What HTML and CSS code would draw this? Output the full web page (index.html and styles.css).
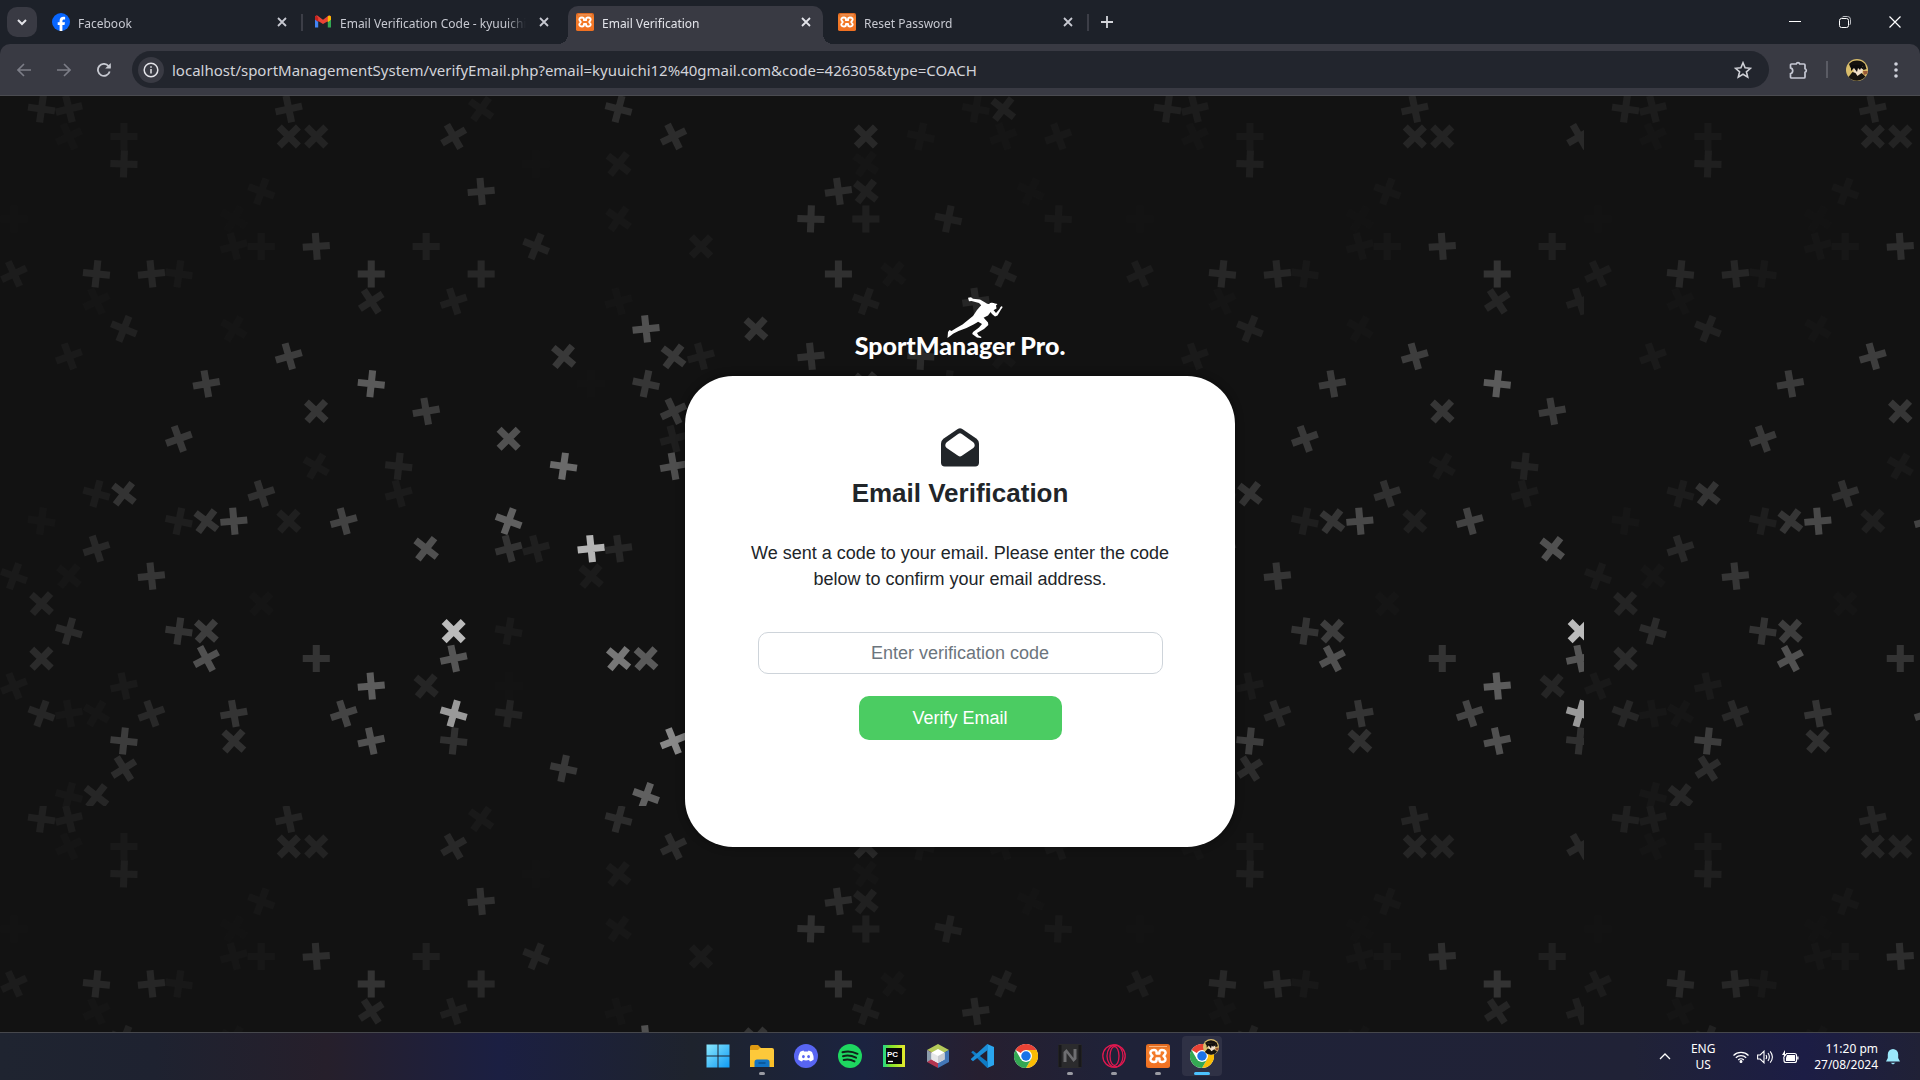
FILE: index.html
```html
<!DOCTYPE html>
<html lang="en">
<head>
<meta charset="utf-8">
<meta name="viewport" content="width=device-width, initial-scale=1">
<title>Email Verification</title>
<link rel="stylesheet" href="styles.css">
</head>
<body>
<svg class="defs" aria-hidden="true">
  <defs>
    <symbol id="close" viewBox="0 0 10 10"><path d="M1 1l8 8M9 1L1 9" fill="none" stroke="currentColor" stroke-width="1.8"/></symbol>
    <linearGradient id="xg" x2="0" y2="1"><stop offset="0" stop-color="#d9651f"/><stop offset=".25" stop-color="#f57f2c"/><stop offset="1" stop-color="#f07021"/></linearGradient>
    <symbol id="xampp" viewBox="0 0 24 24">
      <rect width="24" height="24" rx="2.5" fill="url(#xg)"/>
      <path d="M3 2.500h18" stroke="#f9b27c" stroke-width="1"/>
      <path d="M8 6c-3.200 0-4.400 2.200-3 4.300L6.500 12 5 13.700C3.600 15.800 4.800 18 8 18c1.700 0 2.600-1 2.600-2.300v-1.200h2.800v1.200c0 1.300.9 2.300 2.600 2.300 3.200 0 4.400-2.200 3-4.300L17.500 12l1.500-1.700C20.400 8.200 19.200 6 16 6c-1.700 0-2.600 1-2.600 2.300v1.200h-2.800V8.300C10.600 7 9.700 6 8 6z" fill="none" stroke="#fff" stroke-width="2.500" stroke-linejoin="round"/>
    </symbol>
    <symbol id="chrome" viewBox="0 0 48 48">
      <circle cx="24" cy="24" r="24" fill="#fff"/>
      <path d="M24 24L3.200 12A24 24 0 0 1 44.800 12H24z" fill="#ea4335"/>
      <path d="M44.800 12A24 24 0 0 1 24 48L34.400 30 24 12z" fill="#fbbc04"/>
      <path d="M3.200 12A24 24 0 0 0 24 48L34.400 30H13.600z" fill="#34a853"/>
      <circle cx="24" cy="24" r="12" fill="#fff"/>
      <circle cx="24" cy="24" r="9.500" fill="#1a73e8"/>
    </symbol>
    <symbol id="avatar" viewBox="0 0 22 22">
      <circle cx="11" cy="11" r="11" fill="#d9bd6b"/>
      <path d="M3 5a11 11 0 0 1 16 0l1.500 5-3 1-1-4-10-1-2 3z" fill="#15120f"/>
      <path d="M7 8l2-1h5l3 3-1 5-4 2-4-2z" fill="#f1dfc9"/>
      <path d="M5 6h11l2 5-3-2-1 2-2-2-1 4-3-4-3 3z" fill="#0d0c0c"/>
      <path d="M2.500 18l4-5 3 1 2 3 4-3 4 3.500a11 11 0 0 1-17 .5z" fill="#17140f"/>
      <path d="M17 12h4.800l-1 3-3 1z" fill="#9b5b37"/>
    </symbol>
  </defs>
</svg>

<header class="browser">
  <div class="tabstrip">
    <button class="tab-search" aria-label="Search tabs"><svg width="10" height="7" viewBox="0 0 10 7"><path d="M1 1l4 4 4-4" fill="none" stroke="#e3e3e8" stroke-width="2"/></svg></button>
    <nav class="tabs" aria-label="Tabs">
      <div class="tab">
        <svg class="favicon" viewBox="0 0 18 18"><circle cx="9" cy="9" r="9" fill="#0866ff"/><path d="M7.600 18v-6H5.700V9.300h1.900V8.100C7.600 5.200 9 3.800 11.600 3.800c.6 0 1.200.1 1.500.2v2.400h-1c-1.200 0-1.700.5-1.700 1.700v1.200H13l-.5 2.700h-2.100v5.900z" fill="#fff"/></svg>
        <a class="tab-title" href="#">Facebook</a>
        <button class="tab-close" aria-label="Close tab"><svg width="10" height="10"><use href="#close"/></svg></button>
      </div>
      <div class="tab">
        <svg class="favicon" viewBox="0 0 18 18"><path d="M1 4v10.500h3.200V7z" fill="#4285f4"/><path d="M13.800 7v7.500H17V4z" fill="#34a853"/><path d="M13.800 4.500L17 3v3.500L13.800 9z" fill="#fbbc04"/><path d="M1 6.500V4.200C1 2.600 2.800 2.200 4 3l5 3.800L14 3c1.200-.8 3-.4 3 1.200v.8l-3.200 3.200L9 11 4.200 8z" fill="#ea4335"/><path d="M13.800 3.200C15 2.200 17 2.600 17 4.300v2.200l-3.200 2.400z" fill="#fbbc04"/><path d="M1 6.500V4.300c0-1 .8-1.600 1.600-1.600L4.200 5v3.900z" fill="#c5221f"/></svg>
        <a class="tab-title" href="#">Email Verification Code - kyuuichi12@gmail.com</a>
        <button class="tab-close" aria-label="Close tab"><svg width="10" height="10"><use href="#close"/></svg></button>
      </div>
      <div class="tab active">
        <svg class="favicon"><use href="#xampp"/></svg>
        <a class="tab-title" href="#" aria-current="page">Email Verification</a>
        <button class="tab-close" aria-label="Close tab"><svg width="10" height="10"><use href="#close"/></svg></button>
      </div>
      <div class="tab">
        <svg class="favicon"><use href="#xampp"/></svg>
        <a class="tab-title" href="#">Reset Password</a>
        <button class="tab-close" aria-label="Close tab"><svg width="10" height="10"><use href="#close"/></svg></button>
      </div>
    </nav>
    <button class="new-tab" aria-label="New tab"><svg width="12" height="12" viewBox="0 0 12 12"><path d="M6 0v12M0 6h12" stroke="#d4d5da" stroke-width="1.800"/></svg></button>
    <div class="window-controls">
      <button aria-label="Minimize"><svg width="12" height="12" viewBox="0 0 12 12"><path d="M0 5.500h12" stroke="#fff"/></svg></button>
      <button aria-label="Restore"><svg width="12" height="12" viewBox="0 0 12 12" fill="none" stroke="#fff"><rect x=".5" y="2.500" width="9" height="9" rx="2"/><path d="M3 1.500Q3.500.5 5 .5h3.500q3 0 3 3V7q0 1.500-1 2" stroke="#b9bbc0"/></svg></button>
      <button aria-label="Close"><svg width="12" height="12" viewBox="0 0 12 12"><path d="M.5.500l11 11M11.500.500l-11 11" stroke="#fff" stroke-width="1.200"/></svg></button>
    </div>
  </div>
  <div class="toolbar">
    <button class="nav-button dim" aria-label="Back"><svg width="14" height="14" viewBox="0 0 14 14"><path d="M14 7H1.500M7 1L1 7l6 6" fill="none" stroke="currentColor" stroke-width="1.600"/></svg></button>
    <button class="nav-button dim" aria-label="Forward"><svg width="14" height="14" viewBox="0 0 14 14"><path d="M0 7h12.500M7 1l6 6-6 6" fill="none" stroke="currentColor" stroke-width="1.600"/></svg></button>
    <button class="nav-button" aria-label="Reload"><svg width="14" height="14" viewBox="0 0 14 14"><path d="M12.700 8.500A6 6 0 1 1 11.500 3L13 4.500" fill="none" stroke="currentColor" stroke-width="1.800"/><path d="M13.800 0v5.600H8.200z" fill="currentColor"/></svg></button>
    <div class="omnibox">
      <button class="site-info" aria-label="View site information"><svg width="16" height="16" viewBox="0 0 16 16"><circle cx="8" cy="8" r="6.800" fill="none" stroke="#e3e3e8" stroke-width="1.500"/><path d="M8 7v4.500M8 4.300v1.500" stroke="#e3e3e8" stroke-width="1.500"/></svg></button>
      <input class="url" type="text" aria-label="Address bar" value="localhost/sportManagementSystem/verifyEmail.php?email=kyuuichi12%40gmail.com&amp;code=426305&amp;type=COACH">
      <button class="star" aria-label="Bookmark this tab"><svg width="18" height="18" viewBox="0 0 18 18"><path d="M9 1.800l2.100 5 5.400.5-4.100 3.500 1.300 5.300L9 13.200l-4.700 2.900 1.300-5.300L1.500 7.300l5.400-.5z" fill="none" stroke="#cfd0d6" stroke-width="1.600"/></svg></button>
    </div>
    <button class="nav-button extensions" aria-label="Extensions"><svg width="20" height="20" viewBox="0 0 20 20"><path d="M2.500 4h4.700a1.900 1.900 0 0 1 3.600 0H15a1 1 0 0 1 1 1v3.700a1.900 1.900 0 0 1 0 3.600V17a1 1 0 0 1-1 1H2.500a1 1 0 0 1-1-1v-3.300a3 3 0 0 0 0-5.800V5a1 1 0 0 1 1-1z" fill="none" stroke="#c6c8d4" stroke-width="1.700"/></svg></button>
    <span class="divider"></span>
    <button class="nav-button profile" aria-label="Profile"><svg width="22" height="22"><use href="#avatar"/></svg></button>
    <button class="nav-button menu" aria-label="Menu"><svg width="4" height="16" viewBox="0 0 4 16" fill="#d0d2dc"><circle cx="2" cy="2" r="1.800"/><circle cx="2" cy="8" r="1.800"/><circle cx="2" cy="14" r="1.800"/></svg></button>
  </div>
</header>

<main class="page">
  <svg class="backdrop" aria-hidden="true">
    <defs>
      <g id="marks"></g>
      <pattern id="tile" width="1584" height="710" patternUnits="userSpaceOnUse">
        <use href="#marks"/>
        <use href="#marks" x="1126"/>
      </pattern>
    </defs>
    <rect width="100%" height="100%" fill="url(#tile)"/>
  </svg>
  <div class="logo">
    <svg class="runner" width="58" height="42" viewBox="0 0 58 42" fill="#fff" aria-hidden="true">
      <path d="M23 .8l3-.6 2 1.500 7 .8 6 3.500 2 2.500-4 2.500-5-5-7.500-2L24 4.300z"/>
      <path d="M38 6l6 1c1-1.500 4-1.800 6-.5l2.500.5-1.500 1.500.5 3-3.500 2-2 1-3 4-6 3-5 4-3.500 2-7 3.500-8 3-5 2.500-6 4.500.5-6 1.500-2 2 1 4-2.500 7-4L28 19l4-6z"/>
      <path d="M31 21l7-3 .5 2.500 4.500 5 .3 2.500L39 32l-7 4 1.500 2.500 3 1.500-.5 1-4-.5-4.800-3.500.8-2 6-4.500 3-3.500-6-3.500z"/>
      <path d="M44 13l3 4 3 2.500 2.500-1L56 12.500l1.500-2-.5-1.500-1.500 1-1 2-3.500 4-3-3.500z"/>
    </svg>
    <span class="logo-text">SportManager Pro.</span>
  </div>
  <form class="card" onsubmit="return false">
    <svg class="mail" width="38" height="39" viewBox="0 0 40 40" preserveAspectRatio="none" aria-hidden="true"><path d="M18 .8q2-1.200 4 0L37.500 11q2.500 2 2.500 5v19.500q0 4-4 4H4q-4 0-4-4V16q0-3 2.500-5z" fill="#212529"/><path d="M18 6.200q2-1.700 4 0l12 8.300q3 3 0 6l-12 8q-2 1.700-4 0L6 20.500q-3-3 0-6z" fill="#fff"/></svg>
    <h1>Email Verification</h1>
    <p id="hint">We sent a code to your email. Please enter the code below to confirm your email address.</p>
    <input class="code" type="text" placeholder="Enter verification code" aria-label="Verification code" aria-describedby="hint">
    <button class="verify" type="submit">Verify Email</button>
  </form>
</main>

<footer class="taskbar">
  <div class="apps">
    <button class="app" aria-label="Start"><svg width="24" height="24" viewBox="0 0 24 24"><defs><linearGradient id="wg" x2="1" y2="1"><stop offset="0" stop-color="#8be8fd"/><stop offset="1" stop-color="#0f9bf5"/></linearGradient></defs><path d="M.5.500h11v11H.5zM12.500.500h11v11h-11zM.5 12.500h11v11H.5zM12.500 12.500h11v11h-11z" fill="url(#wg)"/></svg></button>
    <button class="app open" aria-label="File Explorer"><svg width="24" height="24" viewBox="0 0 24 24"><path d="M0 3q0-2 2-2h6l3 3v5H0z" fill="#e09a12"/><path d="M0 6h8l2-2h12q2 0 2 2v17H0z" fill="#fdc93a"/><path d="M0 16h24v5q0 2-2 2H2q-2 0-2-2z" fill="#fbbf27"/><path d="M4.500 23v-5q0-2.500 2.500-2.500h10q2.500 0 2.500 2.500v5z" fill="#1173c4"/><path d="M8.500 19h7" stroke="#0a518f" stroke-width="1.500"/></svg></button>
    <button class="app" aria-label="Discord"><svg width="24" height="24" viewBox="0 0 24 24"><circle cx="12" cy="12" r="12" fill="#5865f2"/><path d="M9.500 6.500L8 7q-1.500.3-2 1-1.800 3.500-1.700 7.500Q6 17.200 8 17.500l1-1.500q3 .8 6 0l1 1.500q2-.3 3.700-2Q19.800 11.500 18 8q-1-.8-3.500-1.500L14 7.500h-4z" fill="#fff"/><ellipse cx="9.400" cy="12.600" rx="1.400" ry="1.600" fill="#5865f2"/><ellipse cx="14.600" cy="12.600" rx="1.400" ry="1.600" fill="#5865f2"/></svg></button>
    <button class="app" aria-label="Spotify"><svg width="24" height="24" viewBox="0 0 24 24"><circle cx="12" cy="12" r="12" fill="#1ed760"/><path d="M4.500 8.200Q12 6 19.500 9.800M5 12.200q6.500-1.800 13 1.500M5.700 16q5.500-1.400 10.800 1.400" fill="none" stroke="#10231a" stroke-width="2" stroke-linecap="round"/></svg></button>
    <button class="app" aria-label="PyCharm"><svg width="22" height="22" viewBox="0 0 22 22"><defs><linearGradient id="pg" x2="1" y2="0"><stop offset="0" stop-color="#21d789"/><stop offset=".35" stop-color="#7fe32c"/><stop offset="1" stop-color="#e6ea2c"/></linearGradient></defs><rect width="22" height="22" fill="url(#pg)"/><rect x="3" y="3" width="16" height="16" fill="#070707"/><path d="M5 16.500h5" stroke="#fff" stroke-width="1.300"/><text x="4" y="11.500" class="pc">PC</text></svg></button>
    <button class="app" aria-label="NetBeans"><svg width="22" height="24" viewBox="0 0 22 24"><path d="M11 0l11 6-11 6L0 6z" fill="#b4c95a"/><path d="M0 6l11 6v12L0 18z" fill="#b3354f"/><path d="M22 6L11 12v12l11-6z" fill="#4376b6"/><path d="M0 6l5 3v6l-5 3z" fill="#8b9bab"/><path d="M11 5l6.500 3.500v7L11 19l-6.500-3.500v-7z" fill="#fff"/><path d="M11 12l6.500-3.500v7L11 19z" fill="#c9ccd1"/><path d="M11 12L4.500 8.500v7L11 19z" fill="#e6e7ea"/></svg></button>
    <button class="app" aria-label="Visual Studio Code"><svg width="24" height="24" viewBox="0 0 24 24"><path d="M17.300 0L24 3v18l-6.700 3z" fill="#2aa5ee"/><path d="M1.200 8.300L3 6.800l15 11.500v5.500h-1z" fill="#0f7ac4"/><path d="M1.200 15.700L3 17.200 18 5.700V.200h-1L.8 14.900z" fill="#1b8dd8"/></svg></button>
    <button class="app" aria-label="Google Chrome"><svg width="24" height="24"><use href="#chrome"/></svg></button>
    <button class="app open" aria-label="Notion Calendar"><svg width="24" height="24" viewBox="0 0 24 24"><rect width="24" height="24" rx="3" fill="#2b2b2d"/><path d="M2 1v22M22 1v22" stroke="#18181a" stroke-width="3"/><path d="M5.500 18V8l3-3 7 9V5h3v10l-3 3-7-9v9z" fill="#6e6e71"/></svg></button>
    <button class="app open" aria-label="Opera GX"><svg width="24" height="24" viewBox="0 0 24 24" fill="none" stroke="#e0184f" stroke-width="1.300"><circle cx="12" cy="12" r="11.200"/><ellipse cx="13" cy="12" rx="8" ry="11"/><ellipse cx="12.500" cy="12" rx="4.500" ry="9.500"/></svg></button>
    <button class="app open" aria-label="XAMPP"><svg width="24" height="24"><use href="#xampp"/></svg></button>
    <button class="app current" aria-label="Google Chrome, Email Verification"><svg width="24" height="24"><use href="#chrome"/></svg><svg class="app-badge" width="16" height="16"><use href="#avatar"/></svg></button>
  </div>
  <div class="tray">
    <button class="chevron" aria-label="Show hidden icons"><svg width="12" height="7" viewBox="0 0 12 7"><path d="M1 6l5-5 5 5" fill="none" stroke="#fff" stroke-width="1.300"/></svg></button>
    <button class="lang">ENG<br>US</button>
    <button class="status" aria-label="Network, volume and battery">
      <svg width="16" height="12" viewBox="0 0 16 12" fill="none" stroke="#fff" stroke-width="1.200"><path d="M.5 4.500a10.600 10.600 0 0 1 15 0M2.800 6.700a7.400 7.400 0 0 1 10.400 0M5.200 9a4 4 0 0 1 5.600 0"/><circle cx="8" cy="10.500" r=".9" fill="#fff"/></svg>
      <svg width="17" height="14" viewBox="0 0 17 14" fill="none" stroke="#fff" stroke-width="1.100"><path d="M.6 5h2.600L7 1.200v11.600L3.200 9H.6zM9 5q1.300 2 0 4M11 3q2.700 4 0 8M13.200 1.300q4.400 5.700 0 11.400"/></svg>
      <svg width="17" height="14" viewBox="0 0 17 14"><path d="M4 3.500h8.500q2 0 2 2v5q0 2-2 2H4q-2 0-2-2v-3" fill="none" stroke="#fff" stroke-width="1.200"/><path d="M5 5h8v6H4V8zM15.200 6.500h1.300v3h-1.300z" fill="#fff"/><path d="M3 0L0 5h2l-1 4 4-5H3z" fill="#fff"/></svg>
    </button>
    <button class="clock">11:20 pm<br>27/08/2024</button>
    <button class="bell" aria-label="Notifications"><svg width="14" height="16" viewBox="0 0 14 16" fill="#9be8fb"><path d="M7 0a5.200 5.200 0 0 1 5.200 5.200V9L14 12.500H0L1.800 9V5.200A5.200 5.200 0 0 1 7 0z"/><path d="M4.500 13.700h5L7 15.500z"/></svg></button>
  </div>
</footer>
<script src="script.js"></script>
</body>
</html>
```
FILE: styles.css
```css
*, *::before, *::after { box-sizing: border-box; }

body {
  margin: 0;
  min-height: 100vh;
  display: flex;
  flex-direction: column;
  background: #121212;
  font-family: "Liberation Sans", Arial, sans-serif;
}

button {
  border: 0;
  padding: 0;
  margin: 0;
  background: none;
  color: inherit;
  font: inherit;
  display: flex;
  align-items: center;
  justify-content: center;
  cursor: pointer;
}

svg { display: block; flex: none; }

.defs { position: absolute; width: 0; height: 0; }

/* Browser frame */
.browser {
  background: #1d2129;
  color: #c7c9d1;
  font-family: "Noto Sans", "Open Sans", sans-serif;
}

.tabstrip { display: flex; height: 44px; }

.tab-search {
  width: 30px;
  height: 30px;
  margin: 7px;
  border-radius: 10px;
  background: #393a43;
}

.tabs { display: flex; padding-top: 6px; }

.tab {
  position: relative;
  width: 255px;
  margin-right: 7px;
  padding: 0 9px 0 8px;
  display: flex;
  align-items: center;
  border-radius: 10px 10px 0 0;
}

.tab:first-child::after,
.tab:last-child::after {
  content: "";
  position: absolute;
  right: -4px;
  top: 8px;
  width: 2px;
  height: 17px;
  background: #3c3e47;
}

.tab.active { background: #393a43; color: #e3e4ea; }

.tab.active::before,
.tab.active::after {
  content: "";
  position: absolute;
  bottom: 0;
  width: 10px;
  height: 10px;
}

.tab.active::before { right: 100%; background: radial-gradient(circle at 0 0, #0000 10px, #393a43 10px); }
.tab.active::after { left: 100%; background: radial-gradient(circle at 100% 0, #0000 10px, #393a43 10px); }

.favicon { width: 18px; height: 18px; margin-bottom: 6px; }

.tab-title {
  flex: 1;
  min-width: 0;
  margin: 0 10px 2px 8px;
  overflow: hidden;
  color: inherit;
  font-size: 12px;
  line-height: 20px;
  text-decoration: none;
  white-space: nowrap;
  mask-image: linear-gradient(to left, #0000, #000 20px);
}

.tab-close { width: 16px; height: 16px; margin-bottom: 6px; }

.new-tab { width: 30px; }

.window-controls { display: flex; margin-left: auto; }
.window-controls button { width: 50px; }

.toolbar {
  display: flex;
  align-items: center;
  height: 52px;
  padding: 0 6px;
  background: #393a43;
  border-bottom: 1px solid #4a4b50;
  border-radius: 10px 10px 0 0;
}

.nav-button { width: 36px; height: 36px; margin-right: 4px; }
.dim { color: #7c7d87; }

.omnibox {
  flex: 1;
  display: flex;
  align-items: center;
  height: 37px;
  margin: 0 15px 0 6px;
  padding: 0 17px 0 6px;
  border-radius: 19px;
  background: #22252d;
}

.site-info { width: 26px; height: 26px; border-radius: 50%; background: #393a43; }

.url {
  flex: 1;
  min-width: 0;
  margin: 0 8px;
  padding: 0;
  border: 0;
  outline: 0;
  background: none;
  color: #d2d3d9;
  font: 15px/20px "Noto Sans", "Open Sans", sans-serif;
}

.extensions { width: 30px; }
.divider { width: 2px; height: 17px; margin: 0 11px 0 8px; background: #5a5b64; }
.profile { margin: 0 3px 0 0; }
.menu { margin: 0; }

/* Page */
.page {
  position: relative;
  flex: 1;
  display: flex;
  flex-direction: column;
  align-items: center;
  justify-content: center;
}

.backdrop { position: absolute; inset: 0; width: 100%; height: 100%; }

.logo {
  position: relative;
  display: flex;
  flex-direction: column;
  align-items: center;
  padding: 16px 0 18px;
  color: #fff;
}

.runner { margin-left: 28px; }

.logo-text {
  margin-top: -7px;
  font: 900 25px/26px Lato, sans-serif;
}

.card {
  position: relative;
  width: 550px;
  max-width: 100%;
  padding: 52px 64px 107px;
  display: flex;
  flex-direction: column;
  align-items: center;
  border-radius: 48px;
  background: #fff;
  color: #212529;
  text-align: center;
  box-shadow: 0 0 8px #00000066;
}

h1 { margin: 10px 0 31px; font-size: 26px; line-height: 32px; }
p { margin: 0 0 40px; font-size: 18px; line-height: 26px; }

.code {
  width: 405px;
  max-width: 100%;
  height: 42px;
  margin-bottom: 22px;
  border: 1px solid #ced4da;
  border-radius: 10px;
  color: #212529;
  font: 18px/26px "Liberation Sans", Arial, sans-serif;
  text-align: center;
}

.code::placeholder { color: #6c757d; opacity: 1; }

.verify {
  width: 203px;
  height: 44px;
  border-radius: 10px;
  background: #4bcc62;
  color: #fff;
  font-size: 18px;
}

/* Taskbar */
.taskbar {
  display: grid;
  grid-template-columns: 1fr auto 1fr;
  align-items: center;
  height: 48px;
  border-top: 1px solid #46474c;
  background: linear-gradient(90deg, #1f2430, #1e2230 8%, #261f2b 17%, #1b1f42 26%, #1e232d 36%, #1b2340 45%, #261f30 51%, #1f2238 58%, #202236 85%, #1c1d45 94%, #202136);
  color: #fff;
  font: 12px/16px "Noto Sans", "Open Sans", sans-serif;
}

.apps { grid-column: 2; display: flex; gap: 4px; margin-bottom: 2px; }

.app { position: relative; width: 40px; height: 40px; border-radius: 4px; }

.app.open::after,
.app.current::after {
  content: "";
  position: absolute;
  bottom: 1px;
  width: 6px;
  height: 3px;
  border-radius: 2px;
  background: #9a9ba3;
}

.app.current { background: #2f3145; }
.app.current::after { width: 16px; background: #4cc2ff; }
.app-badge { position: absolute; top: 3px; right: 3px; }

.pc { fill: #fff; font: bold 8px/8px "Liberation Sans", sans-serif; }

.tray { display: flex; align-items: center; justify-content: flex-end; padding-right: 20px; }
.chevron { width: 32px; height: 40px; }
.lang { width: 44px; }
.status { gap: 8px; margin: 0 15px 0 8px; }
.clock { text-align: right; }
.bell { width: 14px; margin-left: 8px; }
```
FILE: script.js
```js
// Backdrop marks, one string per grid row: "column:angle:grey level".
const rows = [
  "1:8:32 2:-14:28 10:-12:36 17:35:25 22:15:44 35:10:23 36:38:32",
  "2:-25:21 4:0:25 10:45:37 11:45:35 16:-30:40 24:-26:44 31:45:40 33:12:22 36:-20:21 38:-20:24",
  "4:2:31 19:0:19 22:38:26 31:35:21",
  "9:20:23 17:-5:48 30:-8:44 31:38:32 37:25:20",
  "0:0:19 8:30:19 22:35:23 29:2:47 31:0:31 34:12:32 38:3:25",
  "8:-15:22 9:0:23 11:-4:45 15:0:31 19:22:35 25:45:26",
  "0:-25:28 3:6:39 5:-6:38 6:8:24 13:0:51 17:0:39 30:0:48 32:38:22 36:24:32",
  "3:-25:21 13:-33:37 16:-18:31 22:-15:21 31:20:29 35:-8:38",
  "4:22:33 8:30:21 23:-6:80 27:42:51",
  "2:-20:26 10:-16:61 20:40:56 24:37:56 25:-15:30 29:-6:48 33:3:42 36:40:22",
  "7:-10:58 13:6:90 21:0:19 23:12:54 31:40:48 34:8:28",
  "11:43:54 15:-10:58 24:-25:56",
  "6:-20:56 18:45:81 24:-15:30",
  "11:30:25 14:6:34 20:8:106 24:-10:78",
  "3:15:28 4:38:51 9:-18:48 14:-15:27",
  "1:8:22 6:12:30 7:37:53 8:-5:72 10:42:31 12:-15:66 18:20:96",
  "3:-18:40 15:38:80 18:-15:51 19:-15:31 21:-6:180 22:-8:38",
  "0:20:26 2:40:22 5:-6:53 21:40:27",
  "1:42:36 9:43:21",
  "2:16:43 6:8:51 7:42:61 16:45:187 18:10:26",
  "1:44:43 7:-28:80 11:0:51 16:-12:85 22:40:119 23:42:90",
  "0:-22:25 4:-12:26 13:-5:92 15:40:37 18:0:19",
  "1:20:38 2:-10:23 3:30:22 5:-20:40 8:-10:52 12:-18:68 16:16:153 18:8:35",
  "4:6:60 8:42:48 13:-12:80 16:6:48 24:-22:136",
  "4:-32:44 20:12:56",
  "2:15:23 3:38:38 23:20:96"
];

const STEP = 27.48;
const marks = document.getElementById("marks");

rows.forEach((row, r) => {
  for (const mark of row.split(" ")) {
    const [column, angle, grey] = mark.split(":").map(Number);
    const path = document.createElementNS("http://www.w3.org/2000/svg", "path");
    path.setAttribute("d", "M-13.500 0h27M0-13.500v27");
    path.setAttribute("stroke-width", 7);
    path.setAttribute("stroke", `rgb(${grey},${grey},${grey})`);
    path.setAttribute("transform", `translate(${14 + column * STEP} ${13 + r * STEP}) rotate(${angle})`);
    marks.append(path);
  }
});
```
